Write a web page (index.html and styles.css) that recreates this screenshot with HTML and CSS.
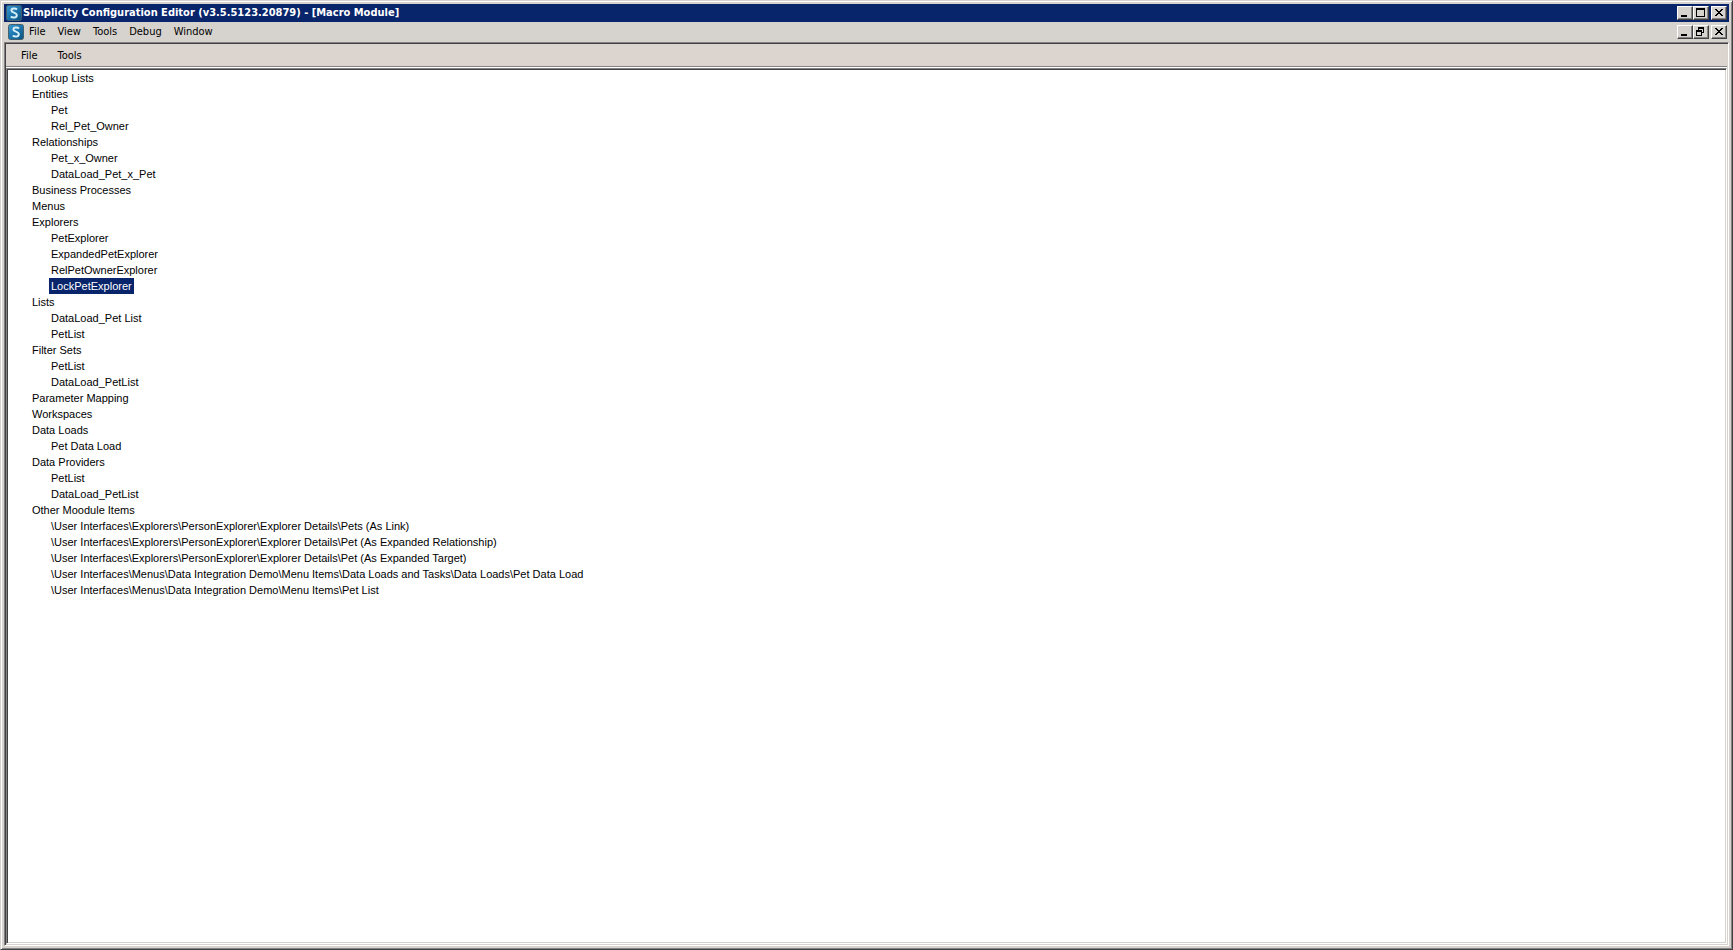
FILE: index.html
```html
<!DOCTYPE html>
<html lang="en">
<head>
  <meta charset="UTF-8" />
  <title>Simplicity Configuration Editor</title>
  <link rel="stylesheet" href="styles.css">
</head>
<body>
  <svg class="defs" width="0" height="0" aria-hidden="true">
    <defs>
      <linearGradient id="appBlue" x1="0" y1="0" x2="1" y2="1">
        <stop offset="0" stop-color="#3a9ad0" />
        <stop offset="0.5" stop-color="#1c74ac" />
        <stop offset="1" stop-color="#0d527f" />
      </linearGradient>
      <symbol id="app-icon" viewBox="0 0 16 16">
        <rect x="0.5" y="0.5" width="15" height="15" rx="2" fill="url(#appBlue)" stroke="#43606f" />
        <path d="M11 4.4C9.8 3.3 5.4 2.9 5.4 5.5C5.4 8 10.8 7.3 10.8 10.2C10.8 13.2 6.2 12.9 4.8 11.6" fill="none" stroke="#d4eef7" stroke-width="2" />
      </symbol>
      <symbol id="minimize" viewBox="0 0 12 10">
        <rect x="2" y="7" width="6" height="2" />
      </symbol>
      <symbol id="maximize" viewBox="0 0 12 10">
        <path d="M1 0h9v9H1zM2 2v6h7V2z" fill-rule="evenodd" />
      </symbol>
      <symbol id="restore" viewBox="0 0 12 10">
        <path d="M3 0h6v6H7V5h1V2H4v1H3zM1 3h6v6H1zM2 5v3h4V5z" fill-rule="evenodd" />
      </symbol>
      <symbol id="close" viewBox="0 0 12 10">
        <path d="M2 1h2v1h1v1h2V2h1V1h2v1H9v1H8v1H7v1h1v1h1v1h1v1H8V7H7V6H5v1H4v1H2V7h1V6h1V5h1V4H4V3H3V2H2z" />
      </symbol>
    </defs>
  </svg>

  <div class="window">
    <header class="title-bar">
      <svg class="app-icon"><use href="#app-icon" /></svg>
      <h1>Simplicity Configuration Editor (v3.5.5123.20879) - [Macro Module]</h1>
      <div class="window-buttons">
        <button aria-label="Minimize"><svg><use href="#minimize" /></svg></button>
        <button aria-label="Maximize"><svg><use href="#maximize" /></svg></button>
        <button class="close" aria-label="Close"><svg><use href="#close" /></svg></button>
      </div>
    </header>

    <nav class="menu-bar">
      <svg class="app-icon"><use href="#app-icon" /></svg>
      <button class="menu">File</button>
      <button class="menu">View</button>
      <button class="menu">Tools</button>
      <button class="menu">Debug</button>
      <button class="menu">Window</button>
      <div class="window-buttons">
        <button aria-label="Minimize module"><svg><use href="#minimize" /></svg></button>
        <button aria-label="Restore module"><svg><use href="#restore" /></svg></button>
        <button class="close" aria-label="Close module"><svg><use href="#close" /></svg></button>
      </div>
    </nav>

    <main class="module">
      <nav class="tool-bar">
        <button class="menu">File</button>
        <button class="menu">Tools</button>
      </nav>

      <div class="tree">
        <ul>
          <li><span>Lookup Lists</span></li>
          <li><span>Entities</span>
            <ul>
              <li><span>Pet</span></li>
              <li><span>Rel_Pet_Owner</span></li>
            </ul>
          </li>
          <li><span>Relationships</span>
            <ul>
              <li><span>Pet_x_Owner</span></li>
              <li><span>DataLoad_Pet_x_Pet</span></li>
            </ul>
          </li>
          <li><span>Business Processes</span></li>
          <li><span>Menus</span></li>
          <li><span>Explorers</span>
            <ul>
              <li><span>PetExplorer</span></li>
              <li><span>ExpandedPetExplorer</span></li>
              <li><span>RelPetOwnerExplorer</span></li>
              <li><span class="selected">LockPetExplorer</span></li>
            </ul>
          </li>
          <li><span>Lists</span>
            <ul>
              <li><span>DataLoad_Pet List</span></li>
              <li><span>PetList</span></li>
            </ul>
          </li>
          <li><span>Filter Sets</span>
            <ul>
              <li><span>PetList</span></li>
              <li><span>DataLoad_PetList</span></li>
            </ul>
          </li>
          <li><span>Parameter Mapping</span></li>
          <li><span>Workspaces</span></li>
          <li><span>Data Loads</span>
            <ul>
              <li><span>Pet Data Load</span></li>
            </ul>
          </li>
          <li><span>Data Providers</span>
            <ul>
              <li><span>PetList</span></li>
              <li><span>DataLoad_PetList</span></li>
            </ul>
          </li>
          <li><span>Other Moodule Items</span>
            <ul>
              <li><span>\User Interfaces\Explorers\PersonExplorer\Explorer Details\Pets (As Link)</span></li>
              <li><span>\User Interfaces\Explorers\PersonExplorer\Explorer Details\Pet (As Expanded Relationship)</span></li>
              <li><span>\User Interfaces\Explorers\PersonExplorer\Explorer Details\Pet (As Expanded Target)</span></li>
              <li><span>\User Interfaces\Menus\Data Integration Demo\Menu Items\Data Loads and Tasks\Data Loads\Pet Data Load</span></li>
              <li><span>\User Interfaces\Menus\Data Integration Demo\Menu Items\Pet List</span></li>
            </ul>
          </li>
        </ul>
      </div>
    </main>
  </div>

  <script>
    let items = document.querySelectorAll('.tree span');

    items.forEach(item => {
      item.onclick = () => {
        document.querySelector('.tree .selected').classList.remove('selected');
        item.classList.add('selected');
      };
    });
  </script>
</body>
</html>
```

FILE: styles.css
```css
* {
  box-sizing: border-box;
}

body {
  margin: 0;
  background-color: #d6d3ce;
  font-family: "Liberation Sans", Arial, sans-serif;
  font-size: 11px;
  color: #000;
}

.defs {
  position: absolute;
}

/* raised window frame */
.window {
  display: flex;
  flex-direction: column;
  min-height: 100vh;
  padding: 2px;
  border: 1px solid;
  border-color: #d6d3ce #424142 #424142 #d6d3ce;
  box-shadow: inset 1px 1px #fff, inset -1px -1px #848284;
}

.title-bar,
.menu-bar,
.tool-bar {
  display: flex;
  align-items: center;
}

.title-bar {
  height: 18px;
  margin: 1px 1px 0;
  padding: 0 2px;
  background-color: #08246b;
}

.title-bar h1 {
  margin: 0 0 0 1px;
  font-family: "DejaVu Sans Condensed", Tahoma, sans-serif;
  font-size: 11px;
  line-height: 18px;
  color: #fff;
}

.app-icon {
  flex: none;
  width: 16px;
  height: 16px;
}

.menu-bar {
  height: 20px;
  margin: 0 1px;
  padding: 0 2px 0 4px;
}

.menu-bar .app-icon {
  margin-right: -1px;
}

.menu {
  padding: 0 6px;
  border: none;
  background: none;
  font-family: "DejaVu Sans Condensed", Tahoma, sans-serif;
  font-size: 11px;
  line-height: 18px;
  color: #000;
}

.menu:hover {
  background-color: #08246b;
  color: #fff;
}

.window-buttons {
  display: flex;
  margin-left: auto;
}

.window-buttons button {
  display: flex;
  width: 16px;
  height: 14px;
  padding: 1px;
  border: 1px solid;
  border-color: #fff #424142 #424142 #fff;
  background-color: #d6d3ce;
  box-shadow: inset -1px -1px #848284;
}

.window-buttons .close {
  margin-left: 2px;
}

.window-buttons svg {
  flex: none;
  width: 12px;
  height: 10px;
  shape-rendering: crispEdges;
}

/* sunken area that holds the open module */
.module {
  flex: 1;
  display: flex;
  flex-direction: column;
  margin: 0 1px 1px;
  padding: 1px;
  border: 1px solid;
  border-color: #848284 #fff #fff #848284;
  box-shadow: inset 1px 1px #424142, inset -1px -1px #d6d3ce;
}

.tool-bar {
  height: 24px;
  padding-left: 9px;
  gap: 8px;
  border-bottom: 1px solid #fff;
  background-color: #dbd4cf;
  box-shadow: inset 0 -1px #848284;
}

.tree {
  flex: 1;
  padding: 1px;
  border: 1px solid;
  border-color: #848284 #fff #fff #848284;
  background-color: #fff;
  box-shadow: inset 1px 1px #424142, inset -1px -1px #d6d3ce;
}

.tree ul {
  margin: 0;
  padding-left: 19px;
  list-style: none;
}

.tree > ul {
  padding-left: 22px;
}

.tree span {
  display: block;
  width: fit-content;
  padding: 0 2px;
  line-height: 16px;
  white-space: nowrap;
  cursor: default;
}

.tree .selected {
  background-color: #08246b;
  color: #fff;
}
```
